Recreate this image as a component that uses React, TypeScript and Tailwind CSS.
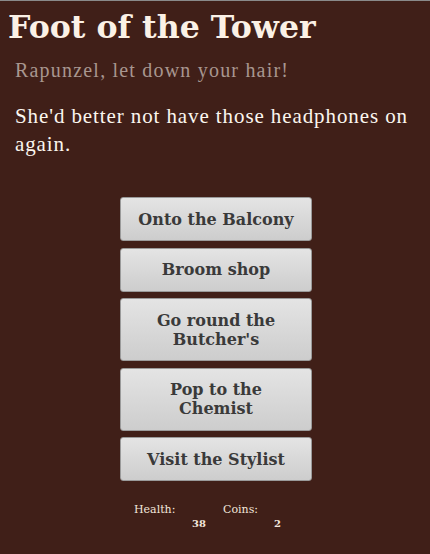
const choices = [
  ["Onto the Balcony"],
  ["Broom shop"],
  ["Go round the", "Butcher's"],
  ["Pop to the", "Chemist"],
  ["Visit the Stylist"],
];

export default function App() {
  return (
    <div className="min-h-[554px] border-t border-[#8a8a8a] bg-[#401f18] font-['Liberation_Serif',serif]">
      <h1 className="px-2 pt-[7px] font-['DejaVu_Serif',serif] text-[31.6px] font-bold leading-[38px] text-[#fbf1e6]">
        Foot of the Tower
      </h1>
      <p className="mt-[12px] px-[15px] text-[20px] leading-[24px] tracking-[1.2px] text-[#a8968f]">
        Rapunzel, let down your hair!
      </p>
      <p className="mt-[20px] px-[15px] text-[21px] leading-[28px] tracking-[0.9px] text-[#fbf6ef]">
        She'd better not have those headphones on again.
      </p>

      <div className="mt-[39px] flex flex-col items-center gap-[6.5px] pl-[2px]">
        {choices.map((lines) => (
          <button
            key={lines.join(" ")}
            type="button"
            className="w-[192px] rounded-[3px] border border-[#9a9a9a] bg-gradient-to-b from-[#e4e4e4] to-[#cdcdcd] px-3 py-[11.5px] font-['DejaVu_Serif',serif] text-[16px] font-bold leading-[19px] text-[#3a3a3a]"
          >
            {lines.map((l) => (
              <div key={l}>{l}</div>
            ))}
          </button>
        ))}
      </div>

      <div className="mt-[22px] flex justify-center gap-[17px] pr-[15px] font-['DejaVu_Serif',serif] text-[11px] text-[#f3e6dc]">
        <Stat label="Health:" value="38" width="w-[72px]" />
        <Stat label="Coins:" value="2" width="w-[58px]" />
      </div>
    </div>
  );
}

function Stat({ label, value, width }: { label: string; value: string; width: string }) {
  return (
    <div className={`flex flex-col ${width}`}>
      <span className="leading-[14px]">{label}</span>
      <span className="text-right text-[10px] font-bold leading-[14px]">{value}</span>
    </div>
  );
}
